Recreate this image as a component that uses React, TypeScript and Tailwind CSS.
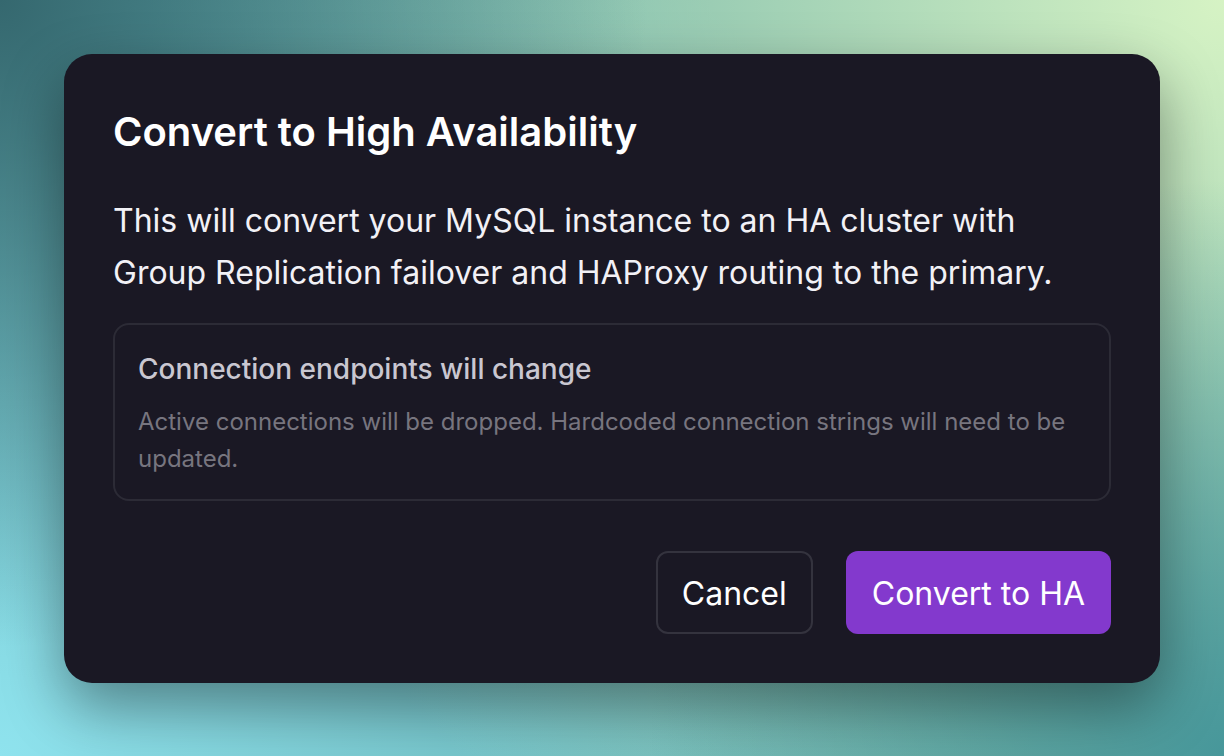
export default function App() {
  return (
    <div
      className="w-[1224px] h-[756px] overflow-hidden flex justify-center items-start pt-[54px] bg-[radial-gradient(circle_at_0%_0%,#35686f_0%,transparent_45%),radial-gradient(circle_at_100%_100%,#47979a_0%,transparent_40%),radial-gradient(circle_at_100%_0%,#d6f3c4_0%,transparent_75%),radial-gradient(circle_at_0%_100%,#8fe3ee_0%,transparent_72%),linear-gradient(#5aa3a2,#5aa3a2)]"
      style={{ fontFamily: 'Inter, "Noto Sans", sans-serif' }}
    >
      <div className="w-[1096px] rounded-[28px] bg-[#1a1824] pt-[54px] pb-[49px] px-[49px] flex flex-col shadow-[0_24px_60px_rgba(0,0,0,0.4)]">
        <h1 className="text-[40px] leading-[48px] font-semibold text-white">
          Convert to High Availability
        </h1>
        <p className="mt-[39px] text-[32px] leading-[52px] text-[#f2f1f6]">
          This will convert your MySQL instance to an HA cluster with Group
          Replication failover and HAProxy routing to the primary.
        </p>
        <div className="mt-[24px] rounded-[16px] border-2 border-[#2c2b36] pt-[26px] pb-[22px] px-[23px]">
          <div className="text-[28px] leading-[36px] font-medium text-[#c9c7d1]">
            Connection endpoints will change
          </div>
          <div className="mt-[16px] text-[24px] leading-[37px] text-[#77757f]">
            Active connections will be dropped. Hardcoded connection strings
            will need to be updated.
          </div>
        </div>
        <div className="mt-[50px] flex justify-end gap-[33px]">
          <button className="h-[83px] px-[24px] pt-[3px] rounded-[12px] border-2 border-[#34333e] text-[32px] text-white bg-transparent">
            Cancel
          </button>
          <button className="h-[83px] px-[26px] pt-[3px] rounded-[12px] bg-[#8339cd] text-[32px] text-white">
            Convert to HA
          </button>
        </div>
      </div>
    </div>
  );
}
